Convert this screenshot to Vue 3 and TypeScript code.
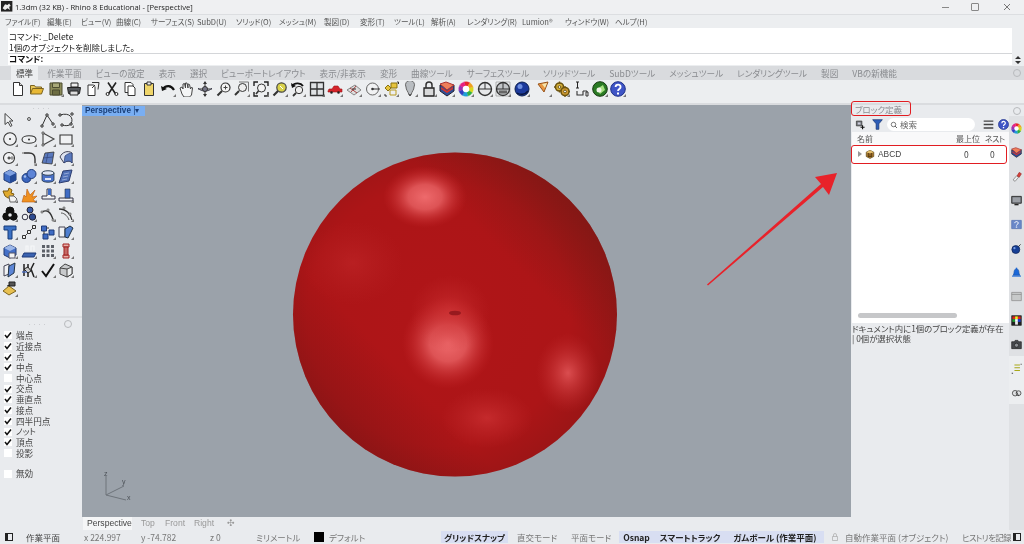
<template>
  <div class="app">
    <div class="titlebar">
      <Ico class="logo" :shapes="icons.rhino" />
      <span class="title-text">1.3dm (32 KB) - Rhino 8 Educational - [Perspective]</span>
      <div class="win-btns">
        <span class="win-min"></span>
        <span class="win-max"></span>
        <svg class="win-close" viewBox="0 0 8 8"><path d="M1 1l6 6M7 1l-6 6" stroke="#777" fill="none" /></svg>
      </div>
    </div>

    <div class="menubar">
      <span v-for="m in menus" :key="m.t" class="menu-item" :style="{ width: m.w + 'px' }">{{ m.t }}</span>
    </div>

    <div class="command">
      <div class="command-grip"></div>
      <div class="command-box">
        <div class="cmd-history">
          <div class="cmd-line">コマンド: _Delete</div>
          <div class="cmd-line">1個のオブジェクトを削除しました。</div>
        </div>
        <div class="cmd-input">コマンド:</div>
      </div>
      <div class="command-spin">
        <svg viewBox="0 0 8 10"><path d="M4 1l3 3H1zM4 9L1 6h6z" fill="#333" /></svg>
      </div>
    </div>

    <div class="tabstrip">
      <span v-for="(t, i) in tabs" :key="t" class="tab" :class="{ 'tab-on': i === 0 }">{{ t }}</span>
      <span class="tab-gear"></span>
    </div>

    <div class="toolbar">
      <span v-for="(n, i) in toolbar" :key="i" class="tool-cell" :class="{ 'tool-gap': n === 'tri' }">
        <Ico class="tool-ico" :shapes="icons[n]" :flag="toolFlags.includes(n)" />
      </span>
    </div>

    <div class="main">
      <div class="left">
        <div class="left-top">
          <div class="grip">····</div>
          <div class="left-grid">
            <span v-for="(n, i) in leftTools" :key="i" class="tool-cell-left">
              <Ico class="tool-ico" :shapes="icons[n]" :flag="i > 1" />
            </span>
          </div>
        </div>
        <div class="left-bottom">
          <div class="grip grip-snap">····<span class="tab-gear small"></span></div>
          <label v-for="o in osnaps" :key="o.t" class="snap" :class="{ 'snap-gap': o.t === '無効' }">
            <span class="box">
              <svg v-if="o.on" viewBox="0 0 8 8"><path d="M1 4l2 2.5L7 1.5" stroke="#111" stroke-width="1.5" fill="none" /></svg>
            </span>
            {{ o.t }}
          </label>
        </div>
      </div>

      <div class="center">
        <div class="viewport">
          <svg class="scene" viewBox="0 0 769 412" preserveAspectRatio="none">
            <defs>
              <radialGradient id="ballBase" cx="0.45" cy="0.5" r="0.58">
                <stop offset="0" stop-color="#b01518" />
                <stop offset="0.7" stop-color="#ac1517" />
                <stop offset="0.92" stop-color="#9c1516" />
                <stop offset="1" stop-color="#921616" />
              </radialGradient>
              <linearGradient id="ballShade" x1="0.86" y1="0.12" x2="0.66" y2="0.32">
                <stop offset="0" stop-color="#6d1a14" stop-opacity="0.55" />
                <stop offset="1" stop-color="#6d1a14" stop-opacity="0" />
              </linearGradient>
              <linearGradient id="ballShade2" x1="0.12" y1="0.85" x2="0.32" y2="0.66">
                <stop offset="0" stop-color="#6d1414" stop-opacity="0.45" />
                <stop offset="1" stop-color="#6d1414" stop-opacity="0" />
              </linearGradient>
              <radialGradient id="glow">
                <stop offset="0" stop-color="#ee6a6c" />
                <stop offset="0.4" stop-color="#e65e60" stop-opacity="0.85" />
                <stop offset="1" stop-color="#c9282b" stop-opacity="0" />
              </radialGradient>
              <radialGradient id="glowSoft">
                <stop offset="0" stop-color="#cf3335" stop-opacity="0.7" />
                <stop offset="1" stop-color="#c22a2c" stop-opacity="0" />
              </radialGradient>
              <radialGradient id="glowMid">
                <stop offset="0" stop-color="#e05456" stop-opacity="0.9" />
                <stop offset="1" stop-color="#c22a2c" stop-opacity="0" />
              </radialGradient>
            </defs>
            <circle cx="373" cy="209.5" r="162" fill="url(#ballBase)" />
            <circle cx="373" cy="209.5" r="162" fill="url(#ballShade)" />
            <circle cx="373" cy="209.5" r="162" fill="url(#ballShade2)" />
            <ellipse cx="343" cy="92" rx="42" ry="31" fill="url(#glow)" />
            <ellipse cx="366" cy="238" rx="46" ry="46" fill="url(#glow)" />
            <ellipse cx="368" cy="208" rx="40" ry="38" fill="url(#glowSoft)" />
            <ellipse cx="486" cy="268" rx="32" ry="40" fill="url(#glowMid)" />
            <ellipse cx="405" cy="313" rx="46" ry="30" fill="url(#glowSoft)" />
            <ellipse cx="271" cy="158" rx="50" ry="42" fill="url(#glowSoft)" opacity="0.5" />
            <ellipse cx="373" cy="208" rx="6" ry="2.3" fill="#981a1f" />
            <path d="M24 390V371M24 390l18-9M24 390l20 5" stroke="#6e747b" fill="none" />
            <text x="22" y="371" class="axis">z</text>
            <text x="40" y="379" class="axis">y</text>
            <text x="45" y="395" class="axis">x</text>
          </svg>
          <div class="view-label">Perspective <i>|▾</i></div>
        </div>
        <div class="view-tabs">
          <span class="vt vt-on">Perspective</span>
          <span class="vt vt-top">Top</span>
          <span class="vt vt-front">Front</span>
          <span class="vt vt-right">Right</span>
          <span class="vt vt-plus">✣</span>
        </div>
      </div>

      <div class="right">
        <div class="panel">
          <div class="panel-title">ブロック定義</div>
          <div class="panel-tools">
            <Ico class="pt-ico" :shapes="icons.blockAdd" />
            <Ico class="pt-ico pt-filter" :shapes="icons.filter" />
            <div class="search"><Ico class="search-ico" :shapes="icons.lens" />検索</div>
            <Ico class="pt-ico pt-menu" :shapes="icons.lines" />
            <Ico class="pt-ico" :shapes="icons.help" />
          </div>
          <div class="list">
            <div class="list-head">
              <span class="c-name">名前</span>
              <span class="c-top">最上位</span>
              <span class="c-nest">ネスト</span>
            </div>
            <div class="list-row">
              <span class="expander"></span>
              <Ico class="row-ico" :shapes="icons.block" />
              <span class="row-name">ABCD</span>
              <span class="row-top">0</span>
              <span class="row-nest">0</span>
            </div>
            <div class="list-fill"></div>
            <div class="hscroll"></div>
          </div>
          <div class="panel-note">
            <div>ドキュメント内に1個のブロック定義が存在</div>
            <div>| 0個が選択状態</div>
          </div>
        </div>
        <div class="side">
          <div class="side-head"><span class="tab-gear"></span></div>
          <div class="side-tabs">
            <span v-for="(n, i) in sideIcons" :key="n" class="side-tab" :class="{ 'side-on': i >= 10 }">
              <Ico class="side-ico" :shapes="icons[n]" />
            </span>
          </div>
        </div>
      </div>
    </div>

    <div class="status">
      <span class="st-square"></span>
      <span
        v-for="s in statusItems"
        :key="s.t"
        class="st-item"
        :class="{ 'st-on': s.on, 'st-dim': s.dim, 'st-pad': s.pad, 'st-tight': s.tight }"
        :style="{ width: s.w + 'px' }"
      >
        <i v-if="s.swatch" class="swatch"></i>
        <Ico v-if="s.lock" class="st-lock" :shapes="icons.lockThin" />
        {{ s.lock ? '' : s.t }}
      </span>
      <span class="st-square st-end"></span>
    </div>

    <div class="mark mark-title"></div>
    <div class="mark mark-row"></div>
    <svg class="arrow" viewBox="0 0 1024 544">
      <path d="M707 284.5L821 184L815 177L837 173L829 195L823 187L708 285.5Z" fill="#e8222a" />
    </svg>
  </div>
</template>

<script setup lang="ts">
import { h } from 'vue'

interface Shape {
  d: string
  f: string
  s: string
  w: number
}

// 16x16 icons, drawn as lists of paths
const p = (d: string, f = 'none', s = '#333', w = 1): Shape => ({ d, f, s, w })
const c = (x: number, y: number, r: number) =>
  `M${x - r} ${y}a${r} ${r} 0 1 0 ${r * 2} 0a${r} ${r} 0 1 0 ${-r * 2} 0z`

function wheel(x: number, y: number, r: number): Shape[] {
  const cols = ['#e8262c', '#f0a020', '#d8d820', '#30b040', '#20a0d8', '#3040c0', '#a030b0', '#e82080']
  const out: Shape[] = cols.map((col, i) => {
    const a = (i / cols.length) * Math.PI * 2 - 1.8
    const b = ((i + 1) / cols.length) * Math.PI * 2 - 1.8
    const d = `M${x} ${y}L${x + r * Math.cos(a)} ${y + r * Math.sin(a)}A${r} ${r} 0 0 1 ${x + r * Math.cos(b)} ${y + r * Math.sin(b)}Z`
    return p(d, col, col, 0.4)
  })
  out.push(p(c(x, y, r * 0.45), '#fff', 'none'))
  return out
}

const Ico = (props: { shapes: Shape[]; flag?: boolean }) => {
  const kids = props.shapes.map((s) =>
    h('path', { d: s.d, fill: s.f, stroke: s.s, 'stroke-width': s.w })
  )
  if (props.flag) kids.push(h('path', { d: 'M16 13v3h-3z', fill: '#777' }))
  return h('svg', { viewBox: '0 0 16 16' }, kids)
}
Ico.props = ['shapes', 'flag']

const icons: Record<string, Shape[]> = {
  rhino: [p('M0 0h14v13H0z', '#222', 'none'), p('M2 9l3-5 3 1 2-2 2 3-2 1 1 4-3-2-3 2z', '#eee', 'none')],
  newDoc: [p('M3.5 1.5h6l3 3v10h-9z', '#fff', '#333'), p('M9.5 1.5v3h3', '#ddd', '#333')],
  open: [p('M1.5 13V4.5h4l1 1.5h6v2', '#e8c75a', '#7c6420'), p('M1.5 13l2-5.5h11l-2 5.5z', '#e8b835', '#7c6420')],
  save: [p('M2 2h12v12H2z', '#8a8a58', '#4d4d30'), p('M4.5 2h7v4.5h-7z', '#a8a878', '#4d4d30'), p('M4.5 9h7v5h-7z', '#6d6d42', '#4d4d30')],
  print: [p('M5 2h7v4H5z', '#eee', '#222'), p('M1.5 6.5h13l-1 6h-11z', '#55585c', '#222'), p('M4 10h8v4H4z', '#ddd', '#222')],
  docs: [p('M3 4h7v10.5H3z', '#fff', '#333'), p('M7 1.5h7l-1 7', '#eee', '#333'), p('M10 4l-3 3', 'none', '#333')],
  cut: [p('M4 1.5l8 12M12 1.5l-8 12', 'none', '#222', 1.6), p(c(3.6, 13, 1.5), '#fff', '#222'), p(c(12.4, 13, 1.5), '#fff', '#222')],
  copy: [p('M3 1.5h6l2 2v8H3z', '#fff', '#333'), p('M6 5h5l2 2v7.5H6z', '#fff', '#333')],
  paste: [p('M3.5 2.5h9v12h-9z', '#efd56a', '#333'), p('M6 1h4v3H6z', '#eee', '#333')],
  undo: [p('M3 8c3-4 8-4 11 1', 'none', '#111', 2.2), p('M1 5l1 5 5-2z', '#111', 'none')],
  hand: [p('M4 13L2 7l2-1 1 2V3l1.5-.5L7.5 7V2l1.5 0 1 5V3l1.5.5 1 4.5 1-2 1 1-1 7-2 2H6z', '#f4f5f6', '#444')],
  orbit: [p('M8 1v14M1 8h14', 'none', '#333'), p('M1 7c3 4 11 4 14 0', 'none', '#445'), p(c(8, 8, 2.5), '#778', '#333'), p('M8 0l-2 3h4zM8 16l-2-3h4z', '#333', 'none')],
  zoom: [p(c(9.5, 6.5, 4.5), '#f4f4f4', '#333', 1.2), p('M6 10l-4.5 4.5', 'none', '#333', 2), p('M7.5 6.5h4M9.5 4.5v4', 'none', '#444')],
  zoomDash: [p('M5 1h9.5v9.5', 'none', '#777', 1), p('M1 14l4-4', 'none', '#333', 2), p(c(8.5, 6.5, 4), '#eee', '#333', 1)],
  zoomExt: [p('M1 5V1h4M11 1h4v4M15 11v4h-4M5 15H1v-4', 'none', '#222', 1.4), p(c(8.5, 7, 4), '#f4f4f4', '#333'), p('M5.5 10l-2.5 3', 'none', '#333', 1.6)],
  zoomY: [p(c(9.5, 6.5, 4.7), '#d9d24a', '#444', 1.2), p('M6 10l-4.5 4.5', 'none', '#333', 2.2), p('M8 5l3 3', 'none', '#fff')],
  viewUndo: [p('M2 5c3-4 9-3 11 0', 'none', '#111', 1.8), p('M1 2l1 5 4-2z', '#111', 'none'), p(c(9, 9, 3.7), '#eee', '#333'), p('M6 12l-3 3', 'none', '#333', 1.8)],
  windows: [p('M1.5 1.5h13v13h-13z', '#dfe2e4', '#333', 1.3), p('M8 1.5v13M1.5 8h13', 'none', '#333', 1.3)],
  car: [p('M1 10l1-2h3l2-3h4l2 3h2v3H1z', '#d3242a', '#a01418', 0.6), p(c(4.5, 11.5, 1.3), '#222', 'none'), p(c(11.5, 11.5, 1.3), '#222', 'none')],
  plan: [p('M1 9l8-5 6 5-7 5z', '#ddd', '#888'), p('M4 7l7 5M10 5l-5 6', 'none', '#a44'), p('M6 8h4', 'none', '#333')],
  point: [p(c(7.5, 8, 6), '#f1f2f3', '#666'), p(c(7.5, 8, 1.3), '#333', 'none'), p('M8 8h7', 'none', '#333')],
  boxes: [p('M2 13L2 15h2M14 1h1.5v2', 'none', '#333'), p('M8 2h6v5H8z', '#e6c43d', '#8a7310'), p('M2 7l3-3 3 3-3 3z', '#e6c43d', '#8a7310'), p('M7 9h6v5H7z', 'none', '#b89a20')],
  bulb: [p('M4 6a4.5 4.5 0 1 1 8 0c0 3-2 4-3 8H7c-1-4-3-5-3-8z', '#b9bdc1', '#666'), p('M7 13h2v2H7z', '#555', 'none')],
  lock: [p('M3 7h10v8H3z', '#d8d9da', '#222', 1.3), p('M5 7V4a3 3 0 0 1 6 0v3', 'none', '#333', 1.5)],
  lockThin: [p('M3 7h10v8H3z', 'none', '#aaa', 1.4), p('M5 7V4a3 3 0 0 1 6 0v3', 'none', '#aaa', 1.4)],
  layers: [p('M1 4l7 3 7-3v6l-7 5-7-5z', '#2f4e97', '#223'), p('M1 3l6-2 8 3-7 5z', '#ef7f5a', '#a33'), p('M2 6l6 4 6-4v2l-6 4-6-4z', '#d8342a', 'none')],
  color: wheel(8, 8, 7.3),
  wire: [p(c(8, 8, 6.5), '#e6e8ea', '#333', 1.4), p('M1.5 8h13M8 1.5v6.5', 'none', '#333')],
  shaded: [p('M1 1h14v14H1z', 'none', '#999', 0.7), p(c(8, 8, 6.5), '#c2c5c8', '#333', 1.3), p('M2 8h12M8 2v6', 'none', '#333'), p('M4 9.5h8v3H4z', '#666', 'none')],
  render: [p(c(8, 8, 7), '#1c3a9c', '#0c2050'), p(c(6, 5.5, 2.5), '#6f90e0', 'none'), p('M3 12c3 2 8 2 11-2', 'none', '#0a1640', 1.5)],
  tri: [p('M2 3l10-2-4 10z', '#e89640', '#98541c'), p('M6 3l5-1-2 5z', '#f4e6b0', 'none')],
  gears: [p(c(5.5, 6, 4), '#d8b238', '#6c5410', 1.6), p(c(11, 10.5, 4), '#d09a30', '#6c5410', 1.6), p(c(5.5, 6, 1.4), '#f4f4f4', '#6c5410'), p(c(11, 10.5, 1.4), '#f4f4f4', '#6c5410'), p('M5.5 .5v2M5.5 9.5v2M0 6h2M11 5v2M11 14v2M15 10.5h1', 'none', '#6c5410', 1.4)],
  flow: [p('M3 1h3M4.5 1v6M3 7h3', 'none', '#222'), p('M4 10v4h6V10', 'none', '#333', 1.1), p('M10 10h4v3', 'none', '#333'), p('M13 11h2v4h-2z', '#eee', '#333')],
  globe: [p(c(8, 8, 7.3), '#2a7a24', '#14380f'), p('M5 8l6-4 2 5-5 4z', '#a6e080', 'none'), p(c(7, 9, 2.5), '#f0f4e8', 'none')],
  help: [p(c(8, 8, 7.3), '#3f55c6', '#1d2f88'), p('M5.6 6c0-3.2 5-3.2 5 0 0 2-2.6 2-2.6 4', 'none', '#fff', 1.8), p('M7 11.5h2v2H7z', '#fff', 'none')],
  select: [p('M3 1.5v11l3-2.5 2.5 4.5 1.5-1L7.5 9H11z', '#eef0f2', '#444')],
  dot: [p(c(8, 7, 1.5), '#d8dadc', '#555')],
  polyline: [p('M2 14L7 3l6 9', 'none', '#333'), p('M1 13h2v2H1zM6 2h2v2H6zM12 11h2v2h-2z', '#fff', '#333')],
  curvePts: [p('M2 3c10-3 14 3 11 9-2 2-6 2-9 1', 'none', '#333'), p('M1 2h2v2H1zM13 1h2v2h-2zM12 11h2v2h-2zM3 12h2v2H3z', '#fff', '#333')],
  circle: [p(c(8, 8, 6.3), '#f0f1f3', '#333', 1.1), p(c(8, 8, 1), '#333', 'none')],
  ellipse: [p('M1 8.5c0-5 14-5 14 0s-14 5-14 0z', '#eef0f2', '#333', 1.1), p(c(8, 8.5, 1), '#333', 'none')],
  polygon: [p('M3 2l11 6-11 6z', '#eef0f2', '#444', 1.1), p('M2 1h2v2H2zM2 13h2v2H2z', '#ccc', '#444', 0.7)],
  rect: [p('M2 4h12v9H2z', '#f0f1f3', '#333', 1.1)],
  circDot: [p(c(7, 8, 5.5), '#f0f1f3', '#333', 1.1), p('M6 7h2v2H6z', '#777', '#333', 0.6), p('M9 7h2v2H9z', '#fff', '#333', 0.6)],
  fillet: [p('M1 3h7c4 0 6 2 6 6v5', 'none', '#333', 1.4), p('M1 2h2v2H1zM13 13h2v2h-2z', '#aaa', 'none')],
  surface: [p('M5 3l9-1-2 12-10-1z', '#5a79bd', '#333', 0.8), p('M8 3L6 13M3 8l10-1', 'none', '#2c3d70', 0.6)],
  surfCurve: [p('M2 7c2-5 8-7 12-4v10c-2-3-6-2-8 0z', '#dfe3f0', '#445'), p('M6 13l1-7c2-2 5-3 7-3v10c-2-3-6-2-8 0z', '#5a79bd', '#2c3d70', 0.7)],
  cube: [p('M2 5l6-3 6 3v7l-6 3-6-3z', '#3f6cc4', '#223a70'), p('M8 8l6-3v7l-6 3z', '#244a96', 'none'), p('M2 5l6-3 6 3-6 3z', '#7ea0e0', 'none')],
  spheres: [p(c(5.5, 10, 4.5), '#3b66bf', '#1f3a78'), p(c(10.5, 6, 4.5), '#5d84d6', '#1f3a78'), p(c(4, 8.5, 1.3), '#a6c0f0', 'none')],
  cyl: [p('M2 5v7c0 3 12 3 12 0V5z', '#4b72c8', '#234', 0.8), p('M2 5c0-3 12-3 12 0s-12 3-12 0z', '#dfe6f5', '#345'), p('M5 10h6v2H5z', '#dfe6f5', 'none')],
  plate: [p('M5 3l9-1-3 11-10 2z', '#4f6fb5', '#2c3d70'), p('M6 6l5-1M5 9l5-1M4 12l5-1', 'none', '#93a8d8')],
  puzzle: [p('M1 4h5l1-3 3 2-1 3 3 1-2 4H6L3 9z', '#e0aa2e', '#7c5a10'), p('M7 9h5l3 3-2 3H8z', '#f1f1f1', '#666')],
  burst: [p('M1 15l2-7 2 2 1-8 3 6 5-5-3 7 5-1-4 4 4 2z', '#ef9120', '#b85a10', 0.6)],
  boolT: [p('M7 2h4v7h4v3H2V9h5z', '#f4f5f6', '#334'), p('M8 2h3v6H8z', '#3f6cc4', 'none')],
  boolU: [p('M1 11h14v3H1z', '#f0f1f3', '#334'), p('M7 2h5v9H7z', '#3f6cc4', '#234', 0.6)],
  blobs: [p(c(8, 5, 4), '#111', '#111'), p(c(4.5, 10.5, 3.7), '#111', '#111'), p(c(11.5, 10.5, 3.7), '#111', '#111'), p(c(8, 9, 1.8), '#e8eaee', 'none')],
  dots3: [p(c(9, 4, 3), '#3a5ca8', '#223'), p(c(4, 11, 2.8), '#eef0f2', '#334'), p(c(11.5, 11, 3.2), '#2c4a90', '#223')],
  arc: [p('M2 6c5-3 9 0 11 8', 'none', '#333', 1.3), p('M1 5h2v2H1zM7 3h2v2H7zM12 13h2v2h-2z', '#bbb', '#444', 0.5)],
  arc2: [p('M1 3c7 0 12 5 13 11', 'none', '#333', 1.3), p('M3 7c4 0 7 4 8 7', 'none', '#555'), p('M5 1h2v2H5zM11 7h2v2h-2z', '#bbb', '#444', 0.5)],
  textT: [p('M2 2h12v4h-4v9H6V6H2z', '#3a70c4', '#173a78')],
  lineDots: [p('M3 13L13 3', 'none', '#444'), p('M1.5 11.5h3v3h-3zM6.5 6.5h3v3h-3zM11.5 1.5h3v3h-3z', '#eee', '#333')],
  squares: [p('M1.5 2h5v5h-5zM9 6h5v5H9zM3 10h5v5H3z', '#3f6cc4', '#1f3a78'), p('M4 7v3M7 4h2', 'none', '#333')],
  panels: [p('M1 3h6v10H1z', '#f0f1f3', '#445'), p('M7 5l5-3 3 2-5 10-3-1z', '#4f7fd0', '#234')],
  cubeArr: [p('M2 5l6-3 6 3v7l-6 3-6-3z', '#4470c8', '#223a70'), p('M2 5l6-3 6 3-6 3z', '#9eb8e8', 'none'), p('M7 10h6v5H7z', '#f4f4f4', '#556')],
  hatch: [p('M1 14l2-4h12l-2 4z', '#3a62b0', '#1f3a78'), p('M5 8V3h2v5M10 8V3h3v5', 'none', '#f6f7f8', 1.2)],
  grid9: [p('M2 2h3v3H2zM6.5 2h3v3h-3zM11 2h3v3h-3zM2 6.5h3v3H2zM6.5 6.5h3v3h-3zM11 6.5h3v3h-3zM2 11h3v3H2zM6.5 11h3v3h-3zM11 11h3v3h-3z', '#5c6068', 'none')],
  column: [p('M5 1h6v3H5zM6 4h4v8H6zM5 12h6v3H5z', '#e8b0a8', '#a02020'), p('M6 6h4M6 8h4M6 10h4', 'none', '#a02020')],
  books: [p('M2 4l5-2v10l-5 2z', '#f0f1f3', '#445'), p('M7 4l6-3-1 10-6 4z', '#5d86d6', '#234')],
  figure: [p('M3 2v12M7 2v13M13 1l-3 6 3 8', 'none', '#222', 1.5), p('M3 7l4-2 3 4-3 2z', '#ccc', '#222'), p('M1 10h5', 'none', '#4466bb', 1.3)],
  check: [p('M2 9l4 5 8-12', 'none', '#111', 2)],
  cubeGray: [p('M2 6l5-4 7 3v7l-5 3-7-3z', '#c8cacc', '#444'), p('M9 7l5-2v7l-5 3zM9 7L2 6', '#eceeef', '#444')],
  diamond: [p('M1 10l6-5 7 5-7 4z', '#e8c050', '#7c6420'), p('M7 1h6v4H7z', '#555', '#222'), p('M5 5l3-1', 'none', '#222')],
  blockAdd: [p('M2 3h8v7H2z', '#707478', '#333'), p('M4 5h4v3H4z', '#ccd', 'none'), p('M11 9v6M8 12h6', 'none', '#111', 1.6)],
  filter: [p('M1 1h14l-5 6v8H6V7z', '#2d5db8', '#14306c')],
  lens: [p(c(7, 7, 4.5), 'none', '#444', 1.4), p('M10 10l4 4', 'none', '#444', 1.6)],
  lines: [p('M1 3h14M1 8h14M1 13h14', 'none', '#444', 2)],
  block: [p('M2 5l6-3 6 3v7l-6 3-6-3z', '#c08a35', '#40300c'), p('M5 6h6v6H5z', '#8a5c20', '#30240a'), p('M2 5l6-3 6 3-6 2z', '#e4c070', 'none')],
  link: [p('M3 13l5-6 3 2-5 6z', '#eee', '#777'), p('M9 7l3-5 3 2-3 5z', '#d8423a', '#a02020')],
  monitor: [p('M1 2h14v10H1z', '#70747a', '#222', 1.2), p('M2.5 3.5h11v7h-11z', '#9b9fa5', 'none'), p('M5 14h6', 'none', '#222', 2)],
  bluebox: [p('M1 2h14v12H1z', '#6a88c8', '#506fb0'), p('M5.5 6c0-3 5-3 5 0 0 2-2.5 1.5-2.5 3.5', 'none', '#fff', 1.4), p('M7 11h2v1.5H7z', '#fff', 'none')],
  bomb: [p(c(7, 9.5, 5.8), '#163f96', '#0c2054'), p(c(5, 7.5, 1.6), '#7aa0e8', 'none'), p('M11 5l3-3', 'none', '#333', 1.3)],
  bell: [p('M3 12c2-2 1-5 2-7 1-3 5-3 6 0 1 2 0 5 2 7z', '#1b68d8', '#1550a8'), p('M1.5 12.5h13v1.5h-13z', '#1b68d8', 'none'), p('M7 1h2v2H7z', '#1b68d8', 'none')],
  gray: [p('M1 2h14v12H1z', '#c8caca', '#888'), p('M1 5h14', 'none', '#888')],
  checker: [p('M1 1h14v14H1z', '#222', '#222'), p('M2 2h4v4H2z', '#e02020', 'none'), p('M6 2h4v4H6z', '#f0f020', 'none'), p('M10 2h4v4h-4z', '#e02020', 'none'), p('M2 6h4v4H2z', '#20a030', 'none'), p('M6 6h4v4H6z', '#fff', 'none'), p('M10 6h4v4h-4z', '#2040d0', 'none'), p('M6 10h4v4H6z', '#f0f0f0', 'none')],
  camera: [p('M1 4h4l1-2h4l1 2h4v10H1z', '#45484c', '#222'), p(c(8, 9, 3), '#8c9094', '#222')],
  list: [p('M5 3h8M5 7h8M5 11h8', 'none', '#a8a818', 1.6), p('M1 14h2v1.5H1zM14 1h1.5v1.5H14z', '#444', 'none')],
  cloud: [p(c(6, 9, 4), '#dfe1e3', '#444', 1.2), p(c(11, 9, 3.5), '#dfe1e3', '#444', 1.2), p('M8 7l3 6', 'none', '#222', 1.2)],
}

const toolbar = ['newDoc', 'open', 'save', 'print', 'docs', 'cut', 'copy', 'paste', 'undo', 'hand', 'orbit', 'zoom', 'zoomDash', 'zoomExt', 'zoomY', 'viewUndo', 'windows', 'car', 'plan', 'point', 'boxes', 'bulb', 'lock', 'layers', 'color', 'wire', 'shaded', 'render', 'tri', 'gears', 'flow', 'globe', 'help']
const toolFlags = ['save', 'undo', 'zoomDash', 'zoomExt', 'zoomY', 'viewUndo', 'windows', 'car', 'plan', 'point', 'boxes', 'bulb', 'lock', 'layers', 'color', 'wire', 'shaded', 'render', 'tri', 'gears', 'globe', 'help']

const leftTools = ['select', 'dot', 'polyline', 'curvePts', 'circle', 'ellipse', 'polygon', 'rect', 'circDot', 'fillet', 'surface', 'surfCurve', 'cube', 'spheres', 'cyl', 'plate', 'puzzle', 'burst', 'boolT', 'boolU', 'blobs', 'dots3', 'arc', 'arc2', 'textT', 'lineDots', 'squares', 'panels', 'cubeArr', 'hatch', 'grid9', 'column', 'books', 'figure', 'check', 'cubeGray', 'diamond']

const sideIcons = ['color', 'layers', 'link', 'monitor', 'bluebox', 'bomb', 'bell', 'gray', 'checker', 'camera', 'list', 'cloud']

const menus = [
  { t: 'ファイル(F)', w: 42 }, { t: '編集(E)', w: 34 }, { t: 'ビュー(V)', w: 35 }, { t: '曲線(C)', w: 35 },
  { t: 'サーフェス(S)', w: 46 }, { t: 'SubD(U)', w: 39 }, { t: 'ソリッド(O)', w: 43 }, { t: 'メッシュ(M)', w: 45 },
  { t: '製図(D)', w: 36 }, { t: '変形(T)', w: 34 }, { t: 'ツール(L)', w: 37 }, { t: '解析(A)', w: 36 },
  { t: 'レンダリング(R)', w: 55 }, { t: 'Lumion®', w: 43 }, { t: 'ウィンドウ(W)', w: 50 }, { t: 'ヘルプ(H)', w: 36 },
]

const tabs = ['標準', '作業平面', 'ビューの設定', '表示', '選択', 'ビューポートレイアウト', '表示/非表示', '変形', '曲線ツール', 'サーフェスツール', 'ソリッドツール', 'SubDツール', 'メッシュツール', 'レンダリングツール', '製図', 'VBの新機能']

const osnaps = [
  { t: '端点', on: true }, { t: '近接点', on: true }, { t: '点', on: true }, { t: '中点', on: true },
  { t: '中心点', on: false }, { t: '交点', on: true }, { t: '垂直点', on: true }, { t: '接点', on: true },
  { t: '四半円点', on: true }, { t: 'ノット', on: true }, { t: '頂点', on: true }, { t: '投影', on: false },
  { t: '無効', on: false },
]

interface StatusItem {
  t: string
  w: number
  dim?: boolean
  on?: boolean
  pad?: boolean
  tight?: boolean
  swatch?: boolean
  lock?: boolean
}

const statusItems: StatusItem[] = [
  { t: '作業平面', w: 58 }, { t: 'x 224.997', w: 57, dim: true }, { t: 'y -74.782', w: 69, dim: true },
  { t: 'z 0', w: 46, dim: true }, { t: 'ミリメートル', w: 58, dim: true },
  { t: 'デフォルト', w: 127, swatch: true, dim: true }, { t: 'グリッドスナップ', w: 67, on: true },
  { t: '直交モード', w: 63, dim: true, pad: true }, { t: '平面モード', w: 48, dim: true },
  { t: 'Osnap', w: 35, on: true }, { t: 'スマートトラック', w: 72, on: true },
  { t: 'ガムボール (作業平面)', w: 98, on: true }, { t: 'lock', w: 21, dim: true, lock: true },
  { t: '自動作業平面 (オブジェクト)', w: 117, dim: true }, { t: 'ヒストリを記録', w: 49, dim: true, tight: true },
]
</script>

<style>
html,
body {
  margin: 0;
  background: #e9ebee;
}
</style>

<style scoped>
.app {
  position: relative;
  width: 1024px;
  height: 544px;
  overflow: hidden;
  display: flex;
  flex-direction: column;
  background: #e9ebee;
  color: #444;
  font-family: 'Noto Sans CJK JP', 'Noto Sans', sans-serif;
  font-size: 8.5px;
  line-height: 1;
  font-feature-settings: 'palt';
  filter: blur(0.35px);
}
svg {
  display: block;
}
.titlebar {
  height: 15px;
  display: flex;
  align-items: center;
  padding-left: 1px;
  background: #eff0f2;
  border-bottom: 1px solid #dcdee1;
  box-sizing: border-box;
}
.logo {
  width: 13px;
  height: 13px;
  margin-right: 1px;
}
.title-text {
  font-family: 'Open Sans', 'Noto Sans', sans-serif;
  font-size: 7.6px;
  line-height: 9px;
  padding-top: 1px;
  color: #222;
}
.win-btns {
  margin-left: auto;
  display: flex;
  align-items: center;
  gap: 24px;
  padding-right: 13px;
}
.win-min {
  width: 7px;
  height: 1px;
  background: #888;
  margin-right: -1.5px;
}
.win-max {
  width: 6px;
  height: 6px;
  border: 1px solid #888;
  border-radius: 1px;
}
.win-close {
  width: 8px;
  height: 8px;
}
.menubar {
  height: 13px;
  display: flex;
  align-items: center;
  padding-left: 5px;
  background: #eceef0;
}
.menu-item {
  flex: none;
  white-space: nowrap;
  color: #555;
  font-size: 7.6px;
}
.command {
  height: 38px;
  display: flex;
  background: #eceef0;
}
.command-grip {
  width: 8px;
}
.command-box {
  flex: 1;
  display: flex;
  flex-direction: column;
  background: #fff;
  color: #222;
  margin-bottom: 1px;
}
.cmd-history {
  height: 26px;
  box-sizing: border-box;
  padding: 3px 0 0 1px;
  border-bottom: 1px solid #d4d6d9;
  overflow: hidden;
}
.cmd-line {
  height: 11px;
  line-height: 11px;
}
.cmd-input {
  height: 10px;
  line-height: 8px;
  padding-left: 1px;
  font-weight: 700;
  color: #111;
}
.command-spin {
  width: 12px;
  display: flex;
  flex-direction: column;
  justify-content: flex-end;
  align-items: center;
  padding-bottom: 1px;
}
.command-spin svg {
  width: 8px;
  height: 10px;
}
.tabstrip {
  height: 14px;
  display: flex;
  align-items: center;
  gap: 14px;
  padding-left: 16px;
  background: #d9dbde;
  color: #8a8c90;
  font-size: 8.6px;
}
.tab {
  white-space: nowrap;
  line-height: 14px;
}
.tab-on {
  background: #eceef0;
  color: #444;
  padding: 0 5px;
  margin: 0 -5px;
}
.tab-gear {
  width: 6px;
  height: 6px;
  border: 1px solid #b8babd;
  border-radius: 50%;
  margin-left: auto;
  margin-right: 3px;
}
.tab-gear.small {
  margin: 0;
}
.toolbar {
  height: 25px;
  display: flex;
  align-items: center;
  padding: 0 0 6px 9px;
  background: #eceef0;
  border-bottom: 2px solid #dadcdf;
  box-sizing: border-box;
}
.tool-cell {
  flex: none;
  width: 18.67px;
  display: flex;
  justify-content: center;
}
.tool-gap {
  margin-left: 3px;
}
.tool-ico {
  width: 16px;
  height: 16px;
}
.main {
  flex: 1;
  display: flex;
  min-height: 0;
}
.left {
  width: 82px;
  flex: none;
  display: flex;
  flex-direction: column;
  background: #e9ebee;
  box-sizing: border-box;
}
.left-top {
  height: 213px;
  box-sizing: border-box;
  padding-left: 1px;
  border-bottom: 2px solid #dcdee1;
}
.grip {
  height: 6px;
  line-height: 6px;
  text-align: center;
  color: #b5b7ba;
  font-size: 7px;
  letter-spacing: 1px;
}
.left-grid {
  display: grid;
  grid-template-columns: repeat(4, 18.7px);
  grid-auto-rows: 18.7px;
}
.tool-cell-left {
  display: flex;
  justify-content: center;
  align-items: center;
}
.left-bottom {
  flex: 1;
  padding: 0 0 0 4px;
}
.grip-snap {
  display: flex;
  align-items: center;
  justify-content: center;
  gap: 17px;
  height: 11px;
  margin-left: 14px;
  margin-bottom: 1px;
}
.snap {
  display: flex;
  align-items: center;
  gap: 4px;
  height: 10.7px;
  font-size: 8.6px;
  color: #444;
}
.snap-gap {
  margin-top: 10px;
}
.box {
  width: 8px;
  height: 8px;
  background: #fff;
  flex: none;
}
.center {
  flex: 1;
  display: flex;
  flex-direction: column;
  min-width: 0;
}
.viewport {
  position: relative;
  flex: 1;
  background: #9ba2aa;
  min-height: 0;
}
.scene {
  width: 100%;
  height: 100%;
}
.axis {
  font-family: 'Liberation Sans', sans-serif;
  font-size: 7px;
  fill: #4c5157;
}
.view-label {
  position: absolute;
  left: 0;
  top: 1px;
  height: 10px;
  width: 63px;
  box-sizing: border-box;
  padding-left: 3px;
  line-height: 10px;
  background: #79aef2;
  color: #1a3f78;
  font-family: 'Liberation Sans', sans-serif;
  font-size: 8.2px;
  font-weight: 700;
  white-space: nowrap;
}
.view-label i {
  font-style: normal;
  font-weight: 400;
}
.view-tabs {
  height: 13px;
  display: flex;
  align-items: stretch;
  background: #e9ebee;
  font-family: 'Liberation Sans', sans-serif;
  font-size: 8.6px;
  color: #999;
}
.vt {
  line-height: 13px;
  white-space: nowrap;
}
.vt-on {
  width: 49px;
  margin-left: 1px;
  padding-left: 4px;
  box-sizing: border-box;
  background: #f5f6f7;
  color: #444;
}
.vt-top {
  margin-left: 9px;
  width: 24px;
}
.vt-front {
  width: 29px;
}
.vt-right {
  width: 33px;
}
.right {
  width: 173px;
  flex: none;
  display: flex;
  background: #e9ebee;
}
.panel {
  width: 158px;
  flex: none;
  display: flex;
  flex-direction: column;
}
.panel-title {
  height: 12px;
  box-sizing: border-box;
  padding: 0 0 4px 4px;
  display: flex;
  align-items: center;
  color: #8a8c90;
}
.panel-tools {
  height: 15px;
  display: flex;
  align-items: center;
  padding-left: 4px;
}
.pt-ico {
  width: 11px;
  height: 11px;
  flex: none;
}
.pt-filter {
  margin-left: 6px;
}
.pt-menu {
  margin: 0 4px 0 8px;
}
.search {
  width: 90px;
  height: 13px;
  margin-left: 4px;
  border-radius: 7px;
  background: #fff;
  display: flex;
  align-items: center;
  gap: 2px;
  padding-left: 3px;
  box-sizing: border-box;
  color: #666;
}
.search-ico {
  width: 8px;
  height: 8px;
}
.list {
  height: 191px;
  background: #fff;
  display: flex;
  flex-direction: column;
  margin-left: 1px;
}
.list-head {
  height: 14px;
  display: flex;
  align-items: center;
  padding-left: 5px;
  background: #f9f9fa;
  color: #555;
  font-size: 8px;
}
.c-name {
  width: 99px;
}
.c-top {
  width: 29px;
}
.c-nest {
  letter-spacing: -0.4px;
}
.list-row {
  height: 16px;
  display: flex;
  align-items: center;
  padding-left: 6px;
  color: #444;
}
.expander {
  width: 0;
  height: 0;
  border-left: 4px solid #999;
  border-top: 3px solid transparent;
  border-bottom: 3px solid transparent;
  margin-right: 3px;
}
.row-ico {
  width: 10px;
  height: 10px;
  margin-right: 3px;
}
.row-name {
  width: 86px;
  font-family: 'Liberation Sans', sans-serif;
  font-size: 8.4px;
}
.row-top {
  width: 26px;
}
.list-fill {
  flex: 1;
}
.hscroll {
  width: 99px;
  height: 5px;
  margin: 0 0 5px 6px;
  border-radius: 3px;
  background: #c6c7c9;
}
.panel-note {
  padding: 1px 0 0 1px;
  font-size: 8.4px;
  line-height: 9.5px;
  color: #444;
  white-space: nowrap;
}
.side {
  width: 15px;
  flex: none;
  display: flex;
  flex-direction: column;
}
.side-head {
  height: 11px;
  display: flex;
  align-items: center;
}
.side-tabs {
  flex: 1;
  display: flex;
  flex-direction: column;
  background: #dfe1e4;
}
.side-tab {
  height: 24px;
  display: flex;
  align-items: center;
  justify-content: center;
}
.side-on {
  background: #eceef0;
}
.side-ico {
  width: 11px;
  height: 11px;
}
.status {
  height: 14px;
  display: flex;
  align-items: center;
  padding-left: 5px;
  background: #e9ebee;
  color: #444;
}
.st-square {
  width: 8px;
  height: 8px;
  border: 1px solid #222;
  border-left-width: 3px;
  box-sizing: border-box;
  flex: none;
  margin-right: 13px;
}
.st-end {
  margin: 0 0 0 2px;
}
.st-item {
  flex: none;
  line-height: 12px;
  white-space: nowrap;
  overflow: hidden;
  display: flex;
  align-items: center;
  box-sizing: border-box;
}
.st-pad {
  padding-left: 9px;
}
.st-tight {
  letter-spacing: -0.7px;
}
.st-dim {
  color: #777;
}
.st-on {
  background: #d8def2;
  color: #222;
  font-weight: 700;
  justify-content: center;
}
.st-lock {
  width: 8px;
  height: 8px;
  margin-left: 7px;
}
.swatch {
  width: 10px;
  height: 10px;
  background: #000;
  margin-right: 5px;
}
.mark {
  position: absolute;
  border: 1.3px solid #e11d22;
  border-radius: 3px;
  box-sizing: border-box;
}
.mark-title {
  left: 851px;
  top: 101px;
  width: 60px;
  height: 15px;
}
.mark-row {
  left: 851px;
  top: 145px;
  width: 156px;
  height: 19px;
}
.arrow {
  position: absolute;
  left: 0;
  top: 0;
  width: 1024px;
  height: 544px;
  pointer-events: none;
}
</style>
